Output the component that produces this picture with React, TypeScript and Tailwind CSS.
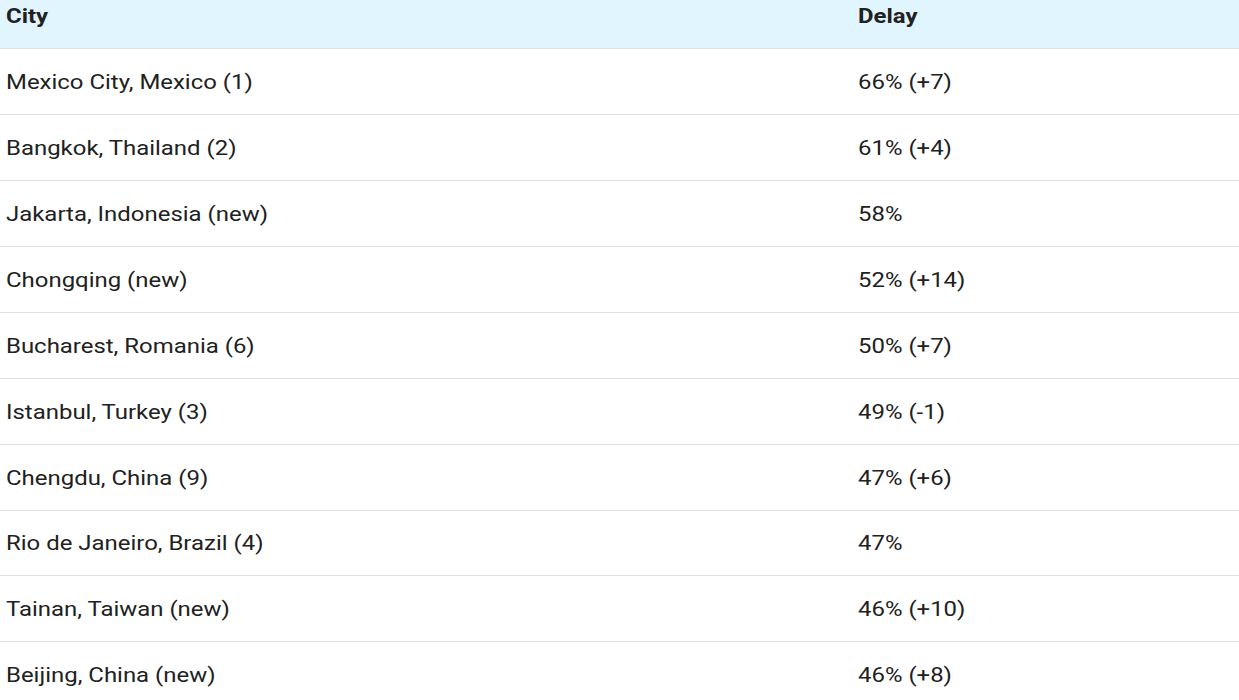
const rows: [string, string][] = [
  ["Mexico City, Mexico (1)", "66% (+7)"],
  ["Bangkok, Thailand (2)", "61% (+4)"],
  ["Jakarta, Indonesia (new)", "58%"],
  ["Chongqing (new)", "52% (+14)"],
  ["Bucharest, Romania (6)", "50% (+7)"],
  ["Istanbul, Turkey (3)", "49% (-1)"],
  ["Chengdu, China (9)", "47% (+6)"],
  ["Rio de Janeiro, Brazil (4)", "47%"],
  ["Tainan, Taiwan (new)", "46% (+10)"],
  ["Beijing, China (new)", "46% (+8)"],
]

// the source capture is stretched a little wider than it is tall
const cell = "inline-block origin-left scale-x-[1.14] whitespace-nowrap"

export default function App() {
  return (
    <div className="w-[1239px] h-[700px] overflow-hidden bg-white text-[#212121] font-['Roboto',sans-serif]">
      <div className="grid grid-cols-[852px_1fr] h-[49px] bg-[#e1f5fe] border-b border-[#e0e0e0] text-[21px] leading-[26px] font-bold pt-[3px]">
        <div className="pl-[6px]"><span className={cell}>City</span></div>
        <div className="pl-[6px]"><span className={cell}>Delay</span></div>
      </div>
      {rows.map(([city, delay], i) => (
        <div
          key={city}
          className={
            "grid grid-cols-[852px_1fr] items-center border-b border-[#e0e0e0] text-[21px] leading-[26px] " +
            (i === 7 ? "h-[65px]" : "h-[66px]")
          }
        >
          <div className="pl-[6px]"><span className={cell}>{city}</span></div>
          <div className="pl-[6px]"><span className={cell}>{delay}</span></div>
        </div>
      ))}
    </div>
  )
}
